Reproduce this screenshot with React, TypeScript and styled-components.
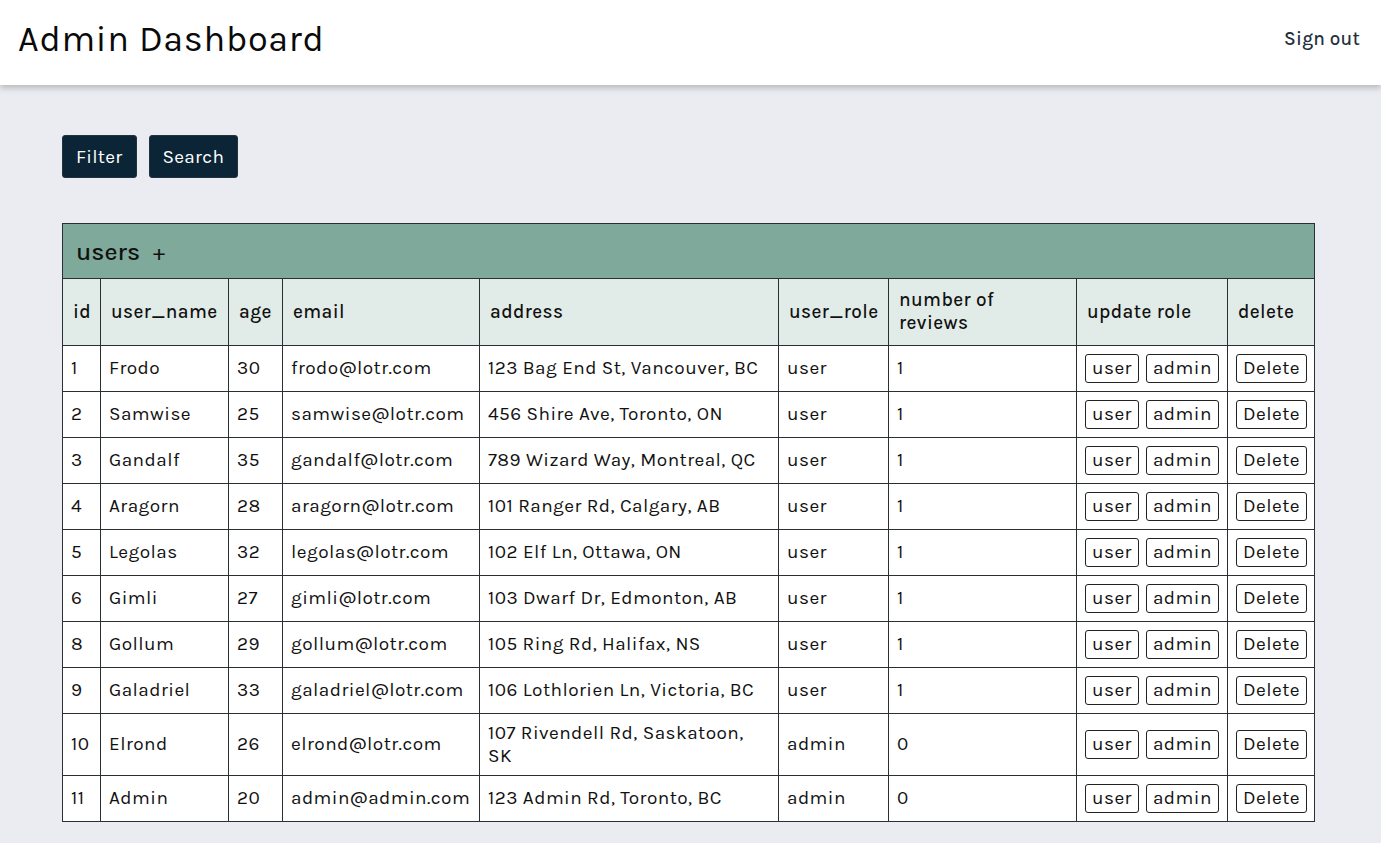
import React from "react";
import styled, { createGlobalStyle } from "styled-components";

const Global = createGlobalStyle`
  html, body { margin: 0; padding: 0; }
  body {
    background: #ebecf1;
    font-family: "Karla", "Noto Sans", "Open Sans", sans-serif;
    color: #111;
  }
`;

const Header = styled.header`
  height: 85px;
  background: #fff;
  display: flex;
  align-items: center;
  justify-content: space-between;
  padding: 0 21px 0 18px;
  box-shadow: 0 3px 6px rgba(0, 0, 0, 0.22);
  position: relative;
`;

const Title = styled.h1`
  margin: 0;
  font-size: 36px;
  font-weight: 400;
  letter-spacing: 0.7px;
  color: #0a0a0a;
  margin-top: -8px;
`;

const SignOut = styled.button`
  background: none;
  border: none;
  font: inherit;
  font-size: 19px;
  font-weight: 500;
  letter-spacing: 0.2px;
  color: #23303c;
  cursor: pointer;
  padding: 0;
  margin-top: -8px;
`;

const Main = styled.main`
  padding: 50px 0 40px 62px;
`;

const Toolbar = styled.div`
  display: flex;
  gap: 12px;
  margin-bottom: 45px;
`;

const DarkButton = styled.button`
  height: 43px;
  padding: 0 13px;
  background: #0b2536;
  color: #fff;
  border: 1px solid #24323d;
  border-radius: 3px;
  font: inherit;
  font-size: 19px;
  letter-spacing: 0.3px;
`;

const Table = styled.table`
  width: 1252px;
  border-collapse: collapse;
  table-layout: fixed;
  border: 1px solid #2a2f33;
  background: #fff;
`;

const CaptionCell = styled.th`
  background: #7fa99a;
  height: 54px;
  text-align: left;
  padding: 0 13px;
  font-size: 25px;
  font-weight: 500;
  border: 1px solid #2a2f33;
`;

const Plus = styled.span`
  font-weight: 400;
  margin-left: 13px;
  font-size: 23px;
`;

const HeadCell = styled.th`
  background: #e1ebe7;
  height: 66px;
  text-align: left;
  padding: 0 10px;
  font-size: 19px;
  font-weight: 500;
  letter-spacing: 0.4px;
  line-height: 23px;
  border: 1px solid #2a2f33;
`;

const Cell = styled.td<{ $tall?: boolean }>`
  height: ${(p) => (p.$tall ? 61 : 45)}px;
  padding: 0 8px;
  font-size: 19px;
  letter-spacing: 0.45px;
  line-height: 23px;
  border: 1px solid #2a2f33;
  vertical-align: middle;
`;

const Actions = styled.div`
  display: flex;
  gap: 7px;
`;

const SmallButton = styled.button`
  height: 29px;
  padding: 0 6px;
  background: #fff;
  border: 1px solid #222;
  border-radius: 3px;
  font: inherit;
  font-size: 19px;
  color: #111;
  letter-spacing: 0.45px;
`;

const widths = [38, 128, 54, 197, 299, 110, 188, 151, 87];

const users = [
  [1, "Frodo", 30, "frodo@lotr.com", "123 Bag End St, Vancouver, BC", "user", 1],
  [2, "Samwise", 25, "samwise@lotr.com", "456 Shire Ave, Toronto, ON", "user", 1],
  [3, "Gandalf", 35, "gandalf@lotr.com", "789 Wizard Way, Montreal, QC", "user", 1],
  [4, "Aragorn", 28, "aragorn@lotr.com", "101 Ranger Rd, Calgary, AB", "user", 1],
  [5, "Legolas", 32, "legolas@lotr.com", "102 Elf Ln, Ottawa, ON", "user", 1],
  [6, "Gimli", 27, "gimli@lotr.com", "103 Dwarf Dr, Edmonton, AB", "user", 1],
  [8, "Gollum", 29, "gollum@lotr.com", "105 Ring Rd, Halifax, NS", "user", 1],
  [9, "Galadriel", 33, "galadriel@lotr.com", "106 Lothlorien Ln, Victoria, BC", "user", 1],
  [10, "Elrond", 26, "elrond@lotr.com", "107 Rivendell Rd, Saskatoon, SK", "admin", 0],
  [11, "Admin", 20, "admin@admin.com", "123 Admin Rd, Toronto, BC", "admin", 0],
] as const;

const headers = ["id", "user_name", "age", "email", "address", "user_role", "number of reviews", "update role", "delete"];

export default function App() {
  return (
    <>
      <Global />
      <Header>
        <Title>Admin Dashboard</Title>
        <SignOut>Sign out</SignOut>
      </Header>
      <Main>
        <Toolbar>
          <DarkButton>Filter</DarkButton>
          <DarkButton>Search</DarkButton>
        </Toolbar>
        <Table>
          <colgroup>
            {widths.map((w, i) => (
              <col key={i} style={{ width: w }} />
            ))}
          </colgroup>
          <thead>
            <tr>
              <CaptionCell colSpan={9}>
                users<Plus>+</Plus>
              </CaptionCell>
            </tr>
            <tr>
              {headers.map((h) => (
                <HeadCell key={h}>{h}</HeadCell>
              ))}
            </tr>
          </thead>
          <tbody>
            {users.map((u) => {
              const tall = u[0] === 10;
              return (
                <tr key={u[0]}>
                  {u.map((v, i) => (
                    <Cell key={i} $tall={tall}>
                      {v}
                    </Cell>
                  ))}
                  <Cell $tall={tall}>
                    <Actions>
                      <SmallButton>user</SmallButton>
                      <SmallButton>admin</SmallButton>
                    </Actions>
                  </Cell>
                  <Cell $tall={tall}>
                    <SmallButton>Delete</SmallButton>
                  </Cell>
                </tr>
              );
            })}
          </tbody>
        </Table>
      </Main>
    </>
  );
}
